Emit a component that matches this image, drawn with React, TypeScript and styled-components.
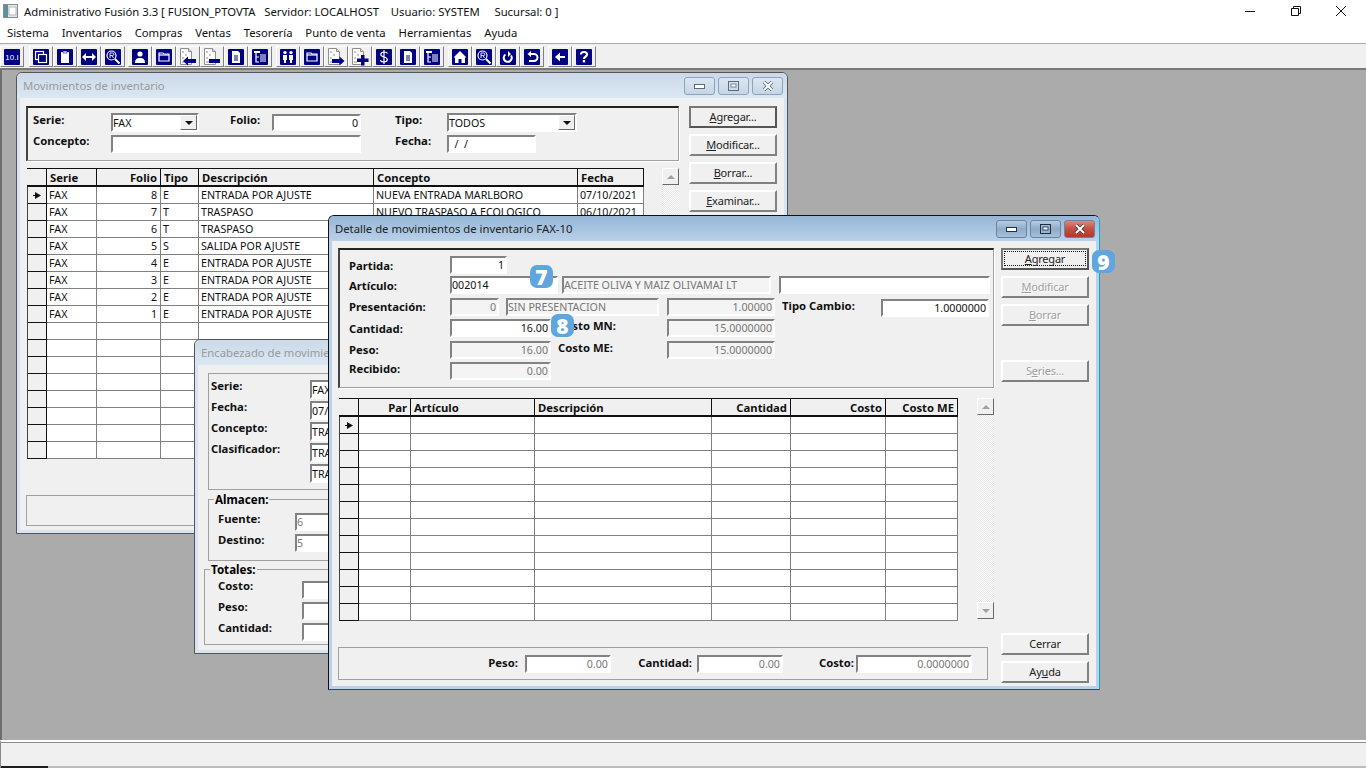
import React from "react";
import styled, { createGlobalStyle } from "styled-components";

const GlobalStyle = createGlobalStyle`
  html, body { margin: 0; padding: 0; height: 100%; overflow: hidden; }
  body { font-family: "Noto Sans", "Liberation Sans", sans-serif; font-size: 10.7px; color: #000; }
  * { box-sizing: border-box; }
`;

/* ---------- toolbar icons ---------- */
const W = { fill: "none", stroke: "#fff", strokeWidth: 1.2 };

const Navy = ({ children }: { children: React.ReactNode }) => (
  <svg width="16" height="16" viewBox="0 0 16 16">
    <rect width="16" height="16" rx="1" fill="#000080" />
    {children}
  </svg>
);

const Doc = ({ children }: { children: React.ReactNode }) => (
  <svg width="18" height="18" viewBox="0 0 18 18">
    <path d="M1.500 .500h8l3 3v13h-11z" fill="#fff" stroke="#8e8e8e" />
    <path d="M9.500 .500v3h3" fill="#d8d8d8" stroke="#8e8e8e" />
    <path d="M3 3h2v2H3zM6 6h2v2H6zM3 9h2v2H3zM3 13h3v2H3z" fill="#c4c4c4" />
    {children}
  </svg>
);

const DocLines = () => (
  <Navy>
    <path d="M4 2h6l2 2v10H4z" fill="#fff" />
    <path d="M6 7h4M6 9h4M6 11h4" stroke="#000080" />
  </Navy>
);
const Tree = () => (
  <Navy>
    <path d="M2 2h6v2H2z" fill="#fff" />
    <path d="M4 4v9h3M4 8h3" {...W} />
    <path d="M8 6h6M8 8h6M8 10h6M8 12h6" stroke="#fff" />
  </Navy>
);
const Folder = () => (
  <Navy>
    <path d="M3 5V4h4l1 1h5v7H3z" {...W} />
    <path d="M3 6h10" {...W} />
  </Navy>
);
const Lens = () => (
  <Navy>
    <circle cx="6.500" cy="6.500" r="4.500" {...W} />
    <path d="M5 9V4h2.500a1.200 1.200 0 0 1 0 2.600H5M7 6.600 8.500 9" stroke="#fff" strokeWidth="0.9" fill="none" />
    <path d="M10 10l4.500 4.500" stroke="#fff" strokeWidth="2" />
  </Navy>
);

const icons: React.ReactNode[][] = [
  [
    <Navy key="a">
      <text x="8" y="11" textAnchor="middle" fontSize="8" fill="#fff" fontFamily="Liberation Sans, sans-serif">10.I</text>
    </Navy>,
  ],
  [
    <Navy key="copy">
      <rect x="2.500" y="2.500" width="8" height="8" {...W} />
      <rect x="5.500" y="5.500" width="8" height="8" fill="#000080" stroke="#fff" strokeWidth="1.2" />
    </Navy>,
    <Navy key="clip">
      <path d="M4 3h8v11H4z" fill="#fff" />
      <path d="M6 2h4v2H6z" fill="#fff" stroke="#000080" strokeWidth="0.6" />
    </Navy>,
    <Navy key="swap">
      <path d="M1 8l4-4v3h6V4l4 4-4 4V9H5v3z" fill="#fff" />
    </Navy>,
    <Lens key="lens" />,
  ],
  [
    <Navy key="user">
      <circle cx="8" cy="5" r="2.600" fill="#fff" />
      <path d="M3 14c0-4 2-5 5-5s5 1 5 5z" fill="#fff" />
    </Navy>,
    <Folder key="f" />,
    <Doc key="dl">
      <path d="M4 13l5-4.500V11h8v4H9v2.500z" fill="#000080" />
    </Doc>,
    <Doc key="dm">
      <path d="M6 11h11v4H6z" fill="#000080" />
    </Doc>,
    <DocLines key="d" />,
    <Tree key="t" />,
  ],
  [
    <Navy key="users">
      <circle cx="5" cy="3.600" r="1.700" fill="#fff" />
      <circle cx="11" cy="3.600" r="1.700" fill="#fff" />
      <path d="M3 6h4v5H6v3H4v-3H3zM9 6h4v5h-1v3h-2v-3H9z" fill="#fff" />
    </Navy>,
    <Folder key="f2" />,
    <Doc key="dr">
      <path d="M17.500 13l-5-4.500V11H5v4h7.500v2.500z" fill="#000080" />
    </Doc>,
    <Doc key="dp">
      <path d="M6 10.500h4V7h3.500v3.500H17.500V14h-4v3.500H10V14H6z" fill="#000080" />
    </Doc>,
    <Navy key="usd">
      <path d="M11.500 4.500C11 3.300 10 3 8 3 6 3 4.800 4 4.800 5.500 4.800 7 6 7.500 8 8c2 .5 3.300 1 3.300 2.600C11.300 12 10 13 8 13c-2 0-3.200-.5-3.700-1.800M8 1v14" {...W} />
    </Navy>,
    <DocLines key="d2" />,
    <Tree key="t2" />,
  ],
  [
    <Navy key="home">
      <path d="M8 2l6.500 6.500H13V14H9.500v-4h-3v4H3V8.500H1.500z" fill="#fff" />
    </Navy>,
    <Lens key="lens2" />,
  ],
  [
    <Navy key="redo">
      <path d="M5.500 5.500A4 4 0 1 0 11 6.500" fill="none" stroke="#fff" strokeWidth="2" />
      <path d="M8 2v6l3-3z" fill="#fff" />
    </Navy>,
    <Navy key="undo">
      <path d="M6 5h4a3.500 3.500 0 0 1 0 7H5" fill="none" stroke="#fff" strokeWidth="2" />
      <path d="M7 2v6L3.500 5z" fill="#fff" />
    </Navy>,
  ],
  [
    <Navy key="back">
      <path d="M3 8l5-4.500V7h5v2H8v3.500z" fill="#fff" />
    </Navy>,
  ],
  [
    <Navy key="help">
      <path d="M5 5.500C5 3.800 6.300 3 8 3s3 .9 3 2.500c0 2-3 2.300-3 4.500" fill="none" stroke="#fff" strokeWidth="2.200" />
      <rect x="6.800" y="11" width="2.400" height="2.400" fill="#fff" />
    </Navy>,
  ],
];
const toolGaps = [4, 9, 7, 8, 8, 4, 8, 4];

/* ---------- app chrome ---------- */
const Shell = styled.div`
  display: flex;
  flex-direction: column;
  height: 100vh;
  background: #fff;
`;
const AppTitle = styled.div`
  height: 22px;
  display: flex;
  align-items: center;
  padding-left: 3px;
  font-size: 11.3px;
  white-space: pre;
  color: #111;
`;
const AppName = styled.span`
  margin-left: 6px;
  flex: 1;
`;
const AppCtl = styled.div`
  width: 45.5px;
  display: flex;
  justify-content: center;
  &:last-child { margin-right: 2px; }
`;
const MenuBar = styled.div`
  height: 21px;
  display: flex;
  align-items: center;
  gap: 12.8px;
  padding-left: 7px;
  font-size: 11.3px;
  color: #111;
`;
const ToolBar = styled.div`
  height: 27px;
  display: flex;
  align-items: flex-end;
  padding-bottom: 1px;
  background: #f0f0f0;
  border-top: 1px solid #a9a9a9;
  border-bottom: 2px solid #7a7a7a;
`;
const ToolGroup = styled.div<{ $gap: number }>`
  display: flex;
  margin-left: ${(p) => p.$gap - 4}px;
`;
const ToolBtn = styled.div`
  width: 24px;
  height: 21px;
  display: flex;
  align-items: center;
  justify-content: center;
  border: 1px solid;
  border-color: #fff #808080 #808080 #fff;
  background: #f0f0f0;
`;
const Desktop = styled.div`
  position: relative;
  flex: 1;
  background: #ababab;
  border-left: 2px solid #6e6e6e;
`;
const StatusBar = styled.div`
  height: 28px;
  display: flex;
  align-items: flex-end;
  background: #f0f0f0;
  border-top: 2px solid #fff;
  box-shadow: inset 0 1px 0 #8a8a8a;
  border-left: 1px solid #8a8a8a;
`;
const StatusEdge = styled.div<{ $dark?: boolean }>`
  height: 2px;
  flex: ${(p) => (p.$dark ? "0 0 47px" : "1")};
  background: ${(p) => (p.$dark ? "#1e1e1e" : "#bcbcbc")};
`;

/* ---------- mdi windows ---------- */
const Win = styled.div<{ $x: number; $y: number; $w: number; $h: number; $on?: boolean }>`
  position: absolute;
  left: ${(p) => p.$x}px;
  top: ${(p) => p.$y}px;
  width: ${(p) => p.$w}px;
  height: ${(p) => p.$h}px;
  display: flex;
  flex-direction: column;
  padding: 0 3px 3px;
  border: 1px solid ${(p) => (p.$on ? "#111" : "#555")};
  border-right-color: ${(p) => (p.$on ? "#12a5c8" : "#555")};
  border-bottom-color: ${(p) => (p.$on ? "#0e5a78" : "#555")};
  border-radius: 6px 6px 0 0;
  background: ${(p) => (p.$on ? "#b9d1ea" : "#d7e4f2")};
`;
const WinTitle = styled.div<{ $on?: boolean; $h: number }>`
  height: ${(p) => p.$h}px;
  margin: 0 -3px;
  padding: 0 4px 0 6px;
  display: flex;
  align-items: center;
  justify-content: space-between;
  font-size: 11.3px;
  border-radius: 5px 5px 0 0;
  color: ${(p) => (p.$on ? "#222" : "#9a9a9a")};
  background: linear-gradient(${(p) => (p.$on ? "#96b6d6, #b9d1ea" : "#cbd9e8, #dbe7f3")});
`;
const Caption = styled.div`
  display: flex;
  gap: 3px;
`;
const CaptionBtn = styled.div<{ $on?: boolean; $red?: boolean }>`
  width: 31px;
  height: 18px;
  display: flex;
  align-items: center;
  justify-content: center;
  border: 1px solid ${(p) => (p.$on ? "#6d84a0" : "#8ba4be")};
  border-radius: 3px;
  background: ${(p) =>
    p.$red
      ? "linear-gradient(#d98a7c, #c2503f 50%, #b03a2a)"
      : p.$on
        ? "linear-gradient(#b9cde2, #8fabc9 50%, #a8c0d9)"
        : "linear-gradient(#dbe6f1, #c6d5e5)"};
`;
const WinBody = styled.div`
  flex: 1;
  display: flex;
  background: #f0f0f0;
`;
const MainCol = styled.div<{ $pl: number; $pt: number; $w: number }>`
  display: flex;
  flex-direction: column;
  flex: none;
  width: ${(p) => p.$w + p.$pl}px;
  padding: ${(p) => p.$pt}px 0 0 ${(p) => p.$pl}px;
`;
const SideCol = styled.div<{ $ml: number; $pt: number; $pb?: number }>`
  display: flex;
  flex-direction: column;
  gap: 6px;
  width: 88px;
  flex: none;
  margin-left: ${(p) => p.$ml}px;
  padding: ${(p) => p.$pt}px 0 ${(p) => p.$pb ?? 0}px;
`;
const Badge = styled.div<{ $x: number; $y: number }>`
  position: absolute;
  left: ${(p) => p.$x}px;
  top: ${(p) => p.$y}px;
  width: 23px;
  height: 23px;
  display: flex;
  align-items: center;
  justify-content: center;
  border-radius: 7px;
  background: #5ea6dd;
  color: #fff;
  font: 800 21px "Open Sans", "Noto Sans", sans-serif;
  z-index: 2;
`;

/* ---------- form parts ---------- */
const Group = styled.div<{ $h: number; $dark?: boolean; $pt?: number; $pl?: number; $ml?: number; $mt?: number; $w?: number }>`
  position: relative;
  flex: none;
  height: ${(p) => p.$h}px;
  ${(p) => (p.$w ? `width: ${p.$w}px;` : "")}
  margin-left: ${(p) => p.$ml ?? 0}px;
  margin-top: ${(p) => p.$mt ?? 0}px;
  padding: ${(p) => p.$pt ?? 0}px 0 0 ${(p) => p.$pl ?? 0}px;
  border-style: solid;
  border-width: ${(p) => (p.$dark ? "2px 1px 1px 2px" : "1px")};
  border-color: ${(p) => (p.$dark ? "#222 #a0a0a0 #a0a0a0 #444" : "#a0a0a0")};
  box-shadow: ${(p) => (p.$dark ? "1px 1px 0 #fff" : "none")};
`;
const Legend = styled.div<{ $x: number }>`
  position: absolute;
  left: ${(p) => p.$x}px;
  top: -7px;
  padding: 0 1px;
  line-height: 13px;
  font-size: 11.6px;
  font-weight: 700;
  background: #f0f0f0;
`;
const Row = styled.div<{ $h?: number }>`
  display: flex;
  align-items: flex-start;
  ${(p) => (p.$h ? `height: ${p.$h}px;` : "")}
`;
const Label = styled.div<{ $w?: number; $ml?: number; $dy?: number; $right?: boolean }>`
  flex: none;
  ${(p) => (p.$w ? `width: ${p.$w}px;` : "")}
  margin-left: ${(p) => p.$ml ?? 0}px;
  margin-top: ${(p) => p.$dy ?? 0}px;
  text-align: ${(p) => (p.$right ? "right" : "left")};
  line-height: 14px;
  font-size: 11.3px;
  font-weight: 700;
  white-space: nowrap;
  color: #111;
`;
const Field = styled.div<{ $w: number; $h?: number; $ml?: number; $mt?: number; $off?: boolean; $white?: boolean; $right?: boolean }>`
  flex: none;
  width: ${(p) => p.$w}px;
  height: ${(p) => p.$h ?? 18}px;
  margin-left: ${(p) => p.$ml ?? 0}px;
  margin-top: ${(p) => p.$mt ?? 0}px;
  padding: 0 1px 0 0;
  display: flex;
  align-items: center;
  justify-content: ${(p) => (p.$right ? "flex-end" : "flex-start")};
  border: 2px solid;
  border-color: #828282 #fff #fff #828282;
  background: ${(p) => (p.$off && !p.$white ? "#f4f4f4" : "#fff")};
  color: ${(p) => (p.$off ? "#777" : "#111")};
  white-space: pre;
  overflow: hidden;
`;
const ComboArrow = styled.div`
  margin-left: auto;
  margin-right: -1px;
  width: 17px;
  height: 15px;
  display: flex;
  align-items: center;
  justify-content: center;
  background: #f0f0f0;
  border: 1px solid;
  border-color: #fff #696969 #696969 #fff;
`;
const Triangle = styled.div`
  width: 0;
  height: 0;
  border: 4px solid transparent;
  border-top: 4px solid #111;
  border-bottom: 0;
`;
const Btn = styled.div<{ $def?: boolean; $off?: boolean; $mt?: string }>`
  flex: none;
  height: 22px;
  padding-bottom: 1px;
  display: flex;
  align-items: center;
  justify-content: center;
  margin-top: ${(p) => p.$mt ?? "0"};
  background: #f0f0f0;
  border: 2px solid;
  border-color: ${(p) => (p.$def ? "#555" : "#fff #808080 #808080 #fff")};
  border-top-color: ${(p) => (p.$def ? "#777" : "#fff")};
  border-left-color: ${(p) => (p.$def ? "#777" : "#fff")};
  font-size: 11px;
  letter-spacing: -0.2px;
  color: ${(p) => (p.$off ? "#a0a0a0" : "#222")};
  text-shadow: ${(p) => (p.$off ? "1px 1px 0 #fff" : "none")};
`;
const Focus = styled.span`
  flex: 1;
  margin: 1px;
  align-self: stretch;
  text-align: center;
  line-height: 14px;
  border: 1px dotted #111;
`;

/* ---------- data grid ---------- */
const GridRow = styled.div<{ $mt: number; $gap: number }>`
  display: flex;
  margin: ${(p) => p.$mt}px 0 0 1px;
  gap: ${(p) => p.$gap}px;
`;
const GridBox = styled.div<{ $tpl: string; $w: number }>`
  display: grid;
  flex: none;
  width: ${(p) => p.$w}px;
  grid-template-columns: ${(p) => p.$tpl};
  grid-template-rows: 19px;
  grid-auto-rows: 17px;
  background: #fff;
`;
const HeadCell = styled.div<{ $right?: boolean }>`
  display: flex;
  align-items: center;
  justify-content: ${(p) => (p.$right ? "flex-end" : "flex-start")};
  padding: 0 3px;
  background: #f0f0f0;
  border-top: 1px solid #111;
  border-right: 1px solid #111;
  border-bottom: 2px solid #111;
  font-size: 11.3px;
  font-weight: 700;
  color: #111;
  white-space: nowrap;
  overflow: hidden;
`;
const Cell = styled.div<{ $right?: boolean }>`
  display: flex;
  align-items: center;
  justify-content: ${(p) => (p.$right ? "flex-end" : "flex-start")};
  padding: 0 3px 1px 2px;
  border-right: 1px solid #808080;
  border-bottom: 1px solid #808080;
  white-space: nowrap;
  overflow: hidden;
  color: #111;
`;
const IndCell = styled.div`
  display: flex;
  align-items: center;
  padding-left: 5px;
  background: #f0f0f0;
  border-right: 1px solid #111;
  border-bottom: 1px solid #111;
  border-left: 1px solid #444;
`;
const Scroll = styled.div<{ $h: number }>`
  width: 17px;
  height: ${(p) => p.$h}px;
  flex: none;
  display: flex;
  flex-direction: column;
  justify-content: space-between;
  background: repeating-conic-gradient(#e6e6e6 0 25%, #fbfbfb 0 50%) 0 0 / 2px 2px;
`;
const ScrollBtn = styled.div`
  height: 17px;
  display: flex;
  align-items: center;
  justify-content: center;
  background: #f0f0f0;
  border: 1px solid;
  border-color: #fff #696969 #696969 #fff;
`;
const ScrollTri = styled.div<{ $up?: boolean }>`
  width: 0;
  height: 0;
  border: 4px solid transparent;
  ${(p) => (p.$up ? "border-bottom: 4px solid #a0a0a0; border-top: 0;" : "border-top: 4px solid #a0a0a0; border-bottom: 0;")}
`;

type Col = { title: string; width: number; right?: boolean };

const RowArrow = () => (
  <svg width="9" height="7" viewBox="0 0 9 7">
    <path d="M0 3h2V0l6 3.500L2 7V4H0z" fill="#111" />
  </svg>
);

const DataGrid = ({ cols, rows, count }: { cols: Col[]; rows: string[][]; count: number }) => (
  <GridBox $tpl={"20px " + cols.map((c) => c.width + "px").join(" ")} $w={20 + cols.reduce((s, c) => s + c.width, 0)}>
    <HeadCell />
    {cols.map((c) => (
      <HeadCell key={c.title} $right={c.right}>
        {c.title}
      </HeadCell>
    ))}
    {Array.from({ length: count }).map((_, r) => (
      <React.Fragment key={r}>
        <IndCell>{r === 0 && <RowArrow />}</IndCell>
        {cols.map((c, i) => (
          <Cell key={c.title} $right={c.right}>
            {rows[r]?.[i]}
          </Cell>
        ))}
      </React.Fragment>
    ))}
  </GridBox>
);

const Combo = ({ w, value }: { w: number; value: string }) => (
  <Field $w={w} $h={19}>
    {value}
    <ComboArrow>
      <Triangle />
    </ComboArrow>
  </Field>
);

const ScrollBar = ({ h }: { h: number }) => (
  <Scroll $h={h}>
    <ScrollBtn>
      <ScrollTri $up />
    </ScrollBtn>
    <ScrollBtn>
      <ScrollTri />
    </ScrollBtn>
  </Scroll>
);

const CaptionBtns = ({ on }: { on?: boolean }) => {
  const c = on ? "#1f2f45" : "#5a6b7d";
  return (
    <Caption>
      <CaptionBtn $on={on}>
        <svg width="11" height="6" viewBox="0 0 11 6">
          <rect x="0.500" y="1.500" width="10" height="4" fill="#fff" stroke={c} />
        </svg>
      </CaptionBtn>
      <CaptionBtn $on={on}>
        <svg width="11" height="10" viewBox="0 0 11 10">
          <rect x="0.500" y="0.500" width="10" height="9" fill="none" stroke={c} />
          <rect x="3" y="3" width="5" height="3" fill="#fff" stroke={c} strokeWidth="0.8" />
        </svg>
      </CaptionBtn>
      <CaptionBtn $on={on} $red={on}>
        <svg width="12" height="10" viewBox="0 0 12 10">
          <path d="M2 1l8 8M10 1L2 9" stroke={on ? "#333" : "#4f6072"} strokeWidth="3.400" />
          <path d="M2 1l8 8M10 1L2 9" stroke="#fff" strokeWidth="2" />
        </svg>
      </CaptionBtn>
    </Caption>
  );
};

const movCols: Col[] = [
  { title: "Serie", width: 50 },
  { title: "Folio", width: 64, right: true },
  { title: "Tipo", width: 38 },
  { title: "Descripción", width: 175 },
  { title: "Concepto", width: 204 },
  { title: "Fecha", width: 66 },
];
const movRows = [
  ["FAX", "8", "E", "ENTRADA POR AJUSTE", "NUEVA ENTRADA MARLBORO", "07/10/2021"],
  ["FAX", "7", "T", "TRASPASO", "NUEVO TRASPASO A ECOLOGICO", "06/10/2021"],
  ["FAX", "6", "T", "TRASPASO"],
  ["FAX", "5", "S", "SALIDA POR AJUSTE"],
  ["FAX", "4", "E", "ENTRADA POR AJUSTE"],
  ["FAX", "3", "E", "ENTRADA POR AJUSTE"],
  ["FAX", "2", "E", "ENTRADA POR AJUSTE"],
  ["FAX", "1", "E", "ENTRADA POR AJUSTE"],
];
const detCols: Col[] = [
  { title: "Par", width: 52, right: true },
  { title: "Artículo", width: 124 },
  { title: "Descripción", width: 177 },
  { title: "Cantidad", width: 79, right: true },
  { title: "Costo", width: 95, right: true },
  { title: "Costo ME", width: 72, right: true },
];

const MovimientosWin = () => (
  <Win $x={14} $y={2} $w={772} $h={462}>
    <WinTitle $h={25}>
      Movimientos de inventario
      <CaptionBtns />
    </WinTitle>
    <WinBody>
      <MainCol $pl={6} $pt={8} $w={653}>
        <Group $h={55} $dark $pt={5} $pl={5}>
          <Row $h={22}>
            <Label $w={78}>Serie:</Label>
            <Combo w={88} value="FAX" />
            <Label $w={42} $ml={31}>Folio:</Label>
            <Field $w={89} $h={17} $mt={1} $right>0</Field>
            <Label $w={52} $ml={34}>Tipo:</Label>
            <Combo w={130} value="TODOS" />
          </Row>
          <Row>
            <Label $w={78} $dy={-1}>Concepto:</Label>
            <Field $w={250} />
            <Label $w={52} $ml={34} $dy={-1}>Fecha:</Label>
            <Field $w={89}>{"  /  /"}</Field>
          </Row>
        </Group>
        <GridRow $mt={7} $gap={18}>
          <DataGrid cols={movCols} rows={movRows} count={16} />
          <ScrollBar h={291} />
        </GridRow>
        <Group $h={31} $mt={36} />
      </MainCol>
      <SideCol $ml={10} $pt={8}>
        <Btn $def><span><u>A</u>gregar...</span></Btn>
        <Btn><span><u>M</u>odificar...</span></Btn>
        <Btn><span><u>B</u>orrar...</span></Btn>
        <Btn><span><u>E</u>xaminar...</span></Btn>
      </SideCol>
    </WinBody>
  </Win>
);

const EncabezadoWin = () => (
  <Win $x={192} $y={269} $w={400} $h={315}>
    <WinTitle $h={25}>Encabezado de movimientos de inventario</WinTitle>
    <WinBody>
      <MainCol $pl={0} $pt={8} $w={390}>
        <Group $h={117} $ml={10} $pl={2} $pt={6}>
          <Row $h={21}><Label $w={99} $dy={-1}>Serie:</Label><Field $w={60} $h={19}>FAX</Field></Row>
          <Row $h={21}><Label $w={99} $dy={-1}>Fecha:</Label><Field $w={80} $h={19}>07/10/2021</Field></Row>
          <Row $h={21}><Label $w={99} $dy={-1}>Concepto:</Label><Field $w={200} $h={19}>TRASPASO</Field></Row>
          <Row $h={21}><Label $w={99} $dy={-1}>Clasificador:</Label><Field $w={200} $h={19}>TRASPASO</Field></Row>
          <Row $h={21}><Label $w={99} /><Field $w={200} $h={19}>TRASPASO</Field></Row>
        </Group>
        <Group $h={62} $ml={10} $mt={9} $pl={9} $pt={13}>
          <Legend $x={5}>Almacen:</Legend>
          <Row $h={21}><Label $w={77} $dy={-1}>Fuente:</Label><Field $w={120} $off $white>6</Field></Row>
          <Row $h={21}><Label $w={77} $dy={-1}>Destino:</Label><Field $w={120} $off $white>5</Field></Row>
        </Group>
        <Group $h={76} $ml={6} $mt={8} $pl={13} $pt={11}>
          <Legend $x={5}>Totales:</Legend>
          <Row $h={21}><Label $w={84} $dy={-2}>Costo:</Label><Field $w={120} /></Row>
          <Row $h={21}><Label $w={84} $dy={-2}>Peso:</Label><Field $w={120} /></Row>
          <Row $h={21}><Label $w={84} $dy={-2}>Cantidad:</Label><Field $w={120} /></Row>
        </Group>
      </MainCol>
    </WinBody>
  </Win>
);

const DetalleWin = () => (
  <Win $x={326} $y={145} $w={772} $h={475} $on>
    <WinTitle $h={25} $on>
      Detalle de movimientos de inventario FAX-10
      <CaptionBtns on />
    </WinTitle>
    <WinBody>
      <MainCol $pl={6} $pt={7} $w={656}>
        <Group $h={140} $dark $pt={6} $pl={9}>
          <Row $h={20}>
            <Label $w={101} $dy={3}>Partida:</Label>
            <Field $w={57} $right>1</Field>
          </Row>
          <Row $h={22}>
            <Label $w={101} $dy={3}>Artículo:</Label>
            <Field $w={108}>002014</Field>
            <Field $w={209} $ml={4} $off>ACEITE OLIVA Y MAIZ OLIVAMAI LT</Field>
            <Field $w={211} $ml={8} />
          </Row>
          <Row $h={21}>
            <Label $w={101} $dy={2}>Presentación:</Label>
            <Field $w={49} $off $right>0</Field>
            <Field $w={153} $ml={7} $off>SIN PRESENTACION</Field>
            <Field $w={108} $ml={8} $off $right>1.00000</Field>
            <Label $w={99} $ml={7} $dy={1}>Tipo Cambio:</Label>
            <Field $w={108} $mt={1} $right>1.0000000</Field>
          </Row>
          <Row $h={22}>
            <Label $w={101} $dy={3}>Cantidad:</Label>
            <Field $w={101} $right>16.00</Field>
            <Label $w={109} $ml={7}>Costo MN:</Label>
            <Field $w={108} $off $right>15.0000000</Field>
          </Row>
          <Row $h={21}>
            <Label $w={101} $dy={2}>Peso:</Label>
            <Field $w={101} $off $right>16.00</Field>
            <Label $w={109} $ml={7}>Costo ME:</Label>
            <Field $w={108} $off $right>15.0000000</Field>
          </Row>
          <Row>
            <Label $w={101}>Recibido:</Label>
            <Field $w={101} $off $right>0.00</Field>
          </Row>
        </Group>
        <GridRow $mt={10} $gap={19}>
          <DataGrid cols={detCols} rows={[]} count={12} />
          <ScrollBar h={221} />
        </GridRow>
        <Group $h={33} $w={650} $mt={26} $pt={7}>
          <Row>
            <Label $w={179} $right $dy={1}>Peso:</Label>
            <Field $w={86} $ml={7} $off $white $right>0.00</Field>
            <Label $w={81} $right $dy={1}>Cantidad:</Label>
            <Field $w={86} $ml={5} $off $white $right>0.00</Field>
            <Label $w={71} $right $dy={1}>Costo:</Label>
            <Field $w={116} $ml={2} $off $white $right>0.0000000</Field>
          </Row>
        </Group>
      </MainCol>
      <SideCol $ml={7} $pt={7} $pb={3}>
        <Btn $def><Focus><u>A</u>gregar</Focus></Btn>
        <Btn $off><span><u>M</u>odificar</span></Btn>
        <Btn $off><span><u>B</u>orrar</span></Btn>
        <Btn $off $mt="28px"><span>S<u>e</u>ries...</span></Btn>
        <Btn $mt="auto">Cerrar</Btn>
        <Btn><span>Ay<u>u</u>da</span></Btn>
      </SideCol>
    </WinBody>
    <Badge $x={201} $y={49}>7</Badge>
    <Badge $x={222} $y={98}>8</Badge>
    <Badge $x={763} $y={34}>9</Badge>
  </Win>
);

export default function App() {
  return (
    <Shell>
      <GlobalStyle />
      <AppTitle>
        <svg width="15" height="14" viewBox="0 0 15 14">
          <rect x="0.500" y="0.500" width="14" height="13" fill="#e8e8e8" stroke="#8a8a8a" />
          <rect x="1" y="1" width="4" height="12" fill="#5f8f9a" />
          <rect x="6" y="3" width="7" height="8" fill="#fff" stroke="#b5b5b5" />
        </svg>
        <AppName>Administrativo Fusión 3.3 [ FUSION_PTOVTA   Servidor: LOCALHOST    Usuario: SYSTEM     Sucursal: 0 ]</AppName>
        <AppCtl>
          <svg width="10" height="10" viewBox="0 0 10 10"><path d="M0 5.500h10" stroke="#111" /></svg>
        </AppCtl>
        <AppCtl>
          <svg width="10" height="10" viewBox="0 0 10 10">
            <path d="M.5 2.500h7v7h-7zM2.500 2.500v-2h7v7h-2" fill="none" stroke="#111" />
          </svg>
        </AppCtl>
        <AppCtl>
          <svg width="10" height="10" viewBox="0 0 10 10"><path d="M0 0l10 10M10 0L0 10" stroke="#111" /></svg>
        </AppCtl>
      </AppTitle>
      <MenuBar>
        {["Sistema", "Inventarios", "Compras", "Ventas", "Tesorería", "Punto de venta", "Herramientas", "Ayuda"].map((m) => (
          <span key={m}>{m}</span>
        ))}
      </MenuBar>
      <ToolBar>
        {icons.map((group, i) => (
          <ToolGroup key={i} $gap={toolGaps[i]}>
            {group.map((icon, j) => (
              <ToolBtn key={j}>{icon}</ToolBtn>
            ))}
          </ToolGroup>
        ))}
      </ToolBar>
      <Desktop>
        <MovimientosWin />
        <EncabezadoWin />
        <DetalleWin />
      </Desktop>
      <StatusBar>
        <StatusEdge $dark />
        <StatusEdge />
      </StatusBar>
    </Shell>
  );
}
